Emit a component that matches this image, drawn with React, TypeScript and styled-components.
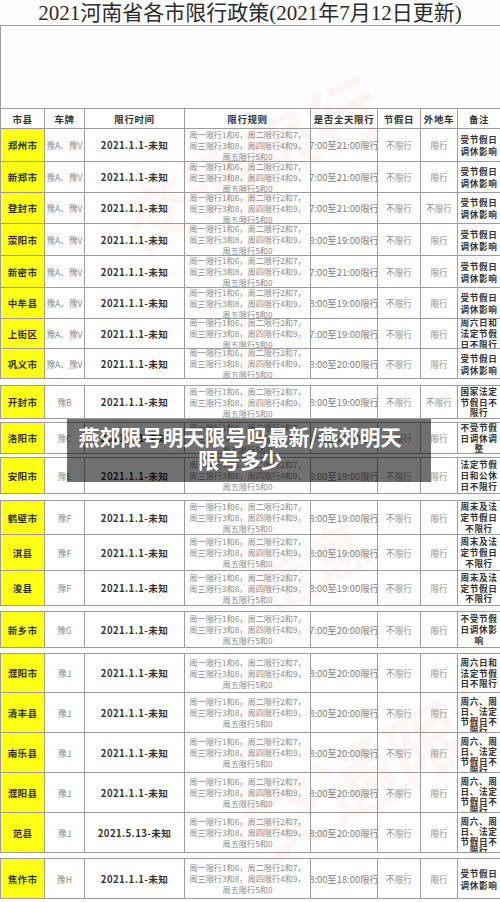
import React from 'react';
import styled, { createGlobalStyle } from 'styled-components';

const Global = createGlobalStyle`
  html, body { margin: 0; padding: 0; background: #fdfdfd; }
  body {
    width: 500px;
    height: 902px;
    overflow: hidden;
    font-family: "Noto Sans CJK SC", "Noto Sans", sans-serif;
  }
`;

const LINE = '#9c9c9c';
const COLS = '44px 40px 100px 126px 67px 43px 37px 42px';

const Page = styled.div`
  position: relative;
  width: 500px;
  height: 902px;
  overflow: hidden;
  background: #fdfdfd;
`;

const Title = styled.h1`
  margin: 0;
  height: 26px;
  box-sizing: border-box;
  border-bottom: 1px solid ${LINE};
  text-align: center;
  font-family: "Liberation Serif", "Noto Sans CJK SC", serif;
  font-weight: normal;
  font-size: 21px;
  line-height: 26px;
  color: #2b2b2b;
  white-space: nowrap;
`;

const Blank = styled.div`
  height: 82px;
  border-left: 1px solid ${LINE};
`;

const Group = styled.div<{ $gap: number }>`
  margin-top: ${(p) => p.$gap}px;
  border-top: 1px solid ${LINE};
  border-left: 1px solid ${LINE};
`;

const Row = styled.div<{ $h: number }>`
  display: grid;
  grid-template-columns: ${COLS};
  height: ${(p) => p.$h}px;
  box-sizing: border-box;
  border-bottom: 1px solid ${LINE};
`;

const Cell = styled.div`
  display: flex;
  align-items: center;
  justify-content: center;
  overflow: hidden;
  box-sizing: border-box;
  border-right: 1px solid ${LINE};
  white-space: nowrap;
  text-align: center;
  &:last-child { border-right: none; }
`;

const HeadCell = styled(Cell)`
  font-size: 9.5px;
  font-weight: 700;
  letter-spacing: 0.6px;
  color: #333;
  background: #fff;
`;

const NameCell = styled(Cell)`
  background: #ffff14;
  font-size: 9.5px;
  font-weight: 700;
  letter-spacing: 0.3px;
  color: #2e2e2e;
`;

const GreyCell = styled(Cell)`
  font-size: 8.6px;
  color: #8c8c8c;
  background: #fff;
`;

const PeriodCell = styled(Cell)`
  font-size: 9.6px;
  font-weight: 700;
  letter-spacing: 0.4px;
  color: #333;
  background: #fff;
`;

const HoursCell = styled(Cell)`
  font-size: 9.4px;
  color: #7c7c7c;
  background: #fff;
`;

const RuleCell = styled(Cell)`
  flex-direction: column;
  font-size: 8.2px;
  line-height: 11px;
  color: #8a8a8a;
  background: #fff;
`;

const NoteCell = styled(Cell)<{ $lh: number; $shift: number }>`
  flex-direction: column;
  font-size: 8.6px;
  font-weight: 700;
  letter-spacing: 0.6px;
  line-height: ${(p) => p.$lh}px;
  padding-top: ${(p) => p.$shift}px;
  color: #333;
  background: #fff;
`;

const Line = styled.span`
  display: block;
`;

const Overlay = styled.div`
  position: absolute;
  left: 67px;
  top: 419px;
  width: 364px;
  height: 63px;
  box-sizing: border-box;
  padding: 6px 26px 0 8px;
  background: rgba(0, 0, 0, 0.56);
  color: #fff;
  font-family: "Noto Sans CJK SC", sans-serif;
  font-weight: 700;
  font-size: 21px;
  line-height: 23px;
  text-align: center;
`;

const Watermark = styled.div<{ $x: number; $y: number; $r: number; $s: number }>`
  position: absolute;
  left: ${(p) => p.$x}px;
  top: ${(p) => p.$y}px;
  transform: rotate(${(p) => p.$r}deg);
  font-family: "Noto Sans CJK SC", sans-serif;
  font-weight: 700;
  font-size: ${(p) => p.$s}px;
  color: rgba(225, 90, 60, 0.055);
  white-space: nowrap;
  pointer-events: none;
`;

type Rec = {
  city: string;
  plate: string;
  period?: string;
  hours: string;
  holiday: string;
  outside: string;
  note: string[];
  h: number;
};

type G = { gap: number; rows: Rec[] };

const A = '豫A、豫V';
const N1 = ['受节假日', '调休影响'];
const N_WEEKEND = ['周末及法', '定节假日', '不限行'];
const N_SAT = ['周六、周', '日、法定', '节假日不', '限行'];

const groups: G[] = [
  {
    gap: 0,
    rows: [
      { city: '郑州市', plate: A, hours: '7:00至21:00限行', holiday: '不限行', outside: '限行', note: N1, h: 33 },
      { city: '新郑市', plate: A, hours: '7:00至21:00限行', holiday: '不限行', outside: '限行', note: N1, h: 31 },
      { city: '登封市', plate: A, hours: '7:00至21:00限行', holiday: '不限行', outside: '不限行', note: N1, h: 31 },
      { city: '荥阳市', plate: A, hours: '8:00至19:00限行', holiday: '不限行', outside: '限行', note: N1, h: 32 },
      { city: '新密市', plate: A, hours: '7:00至21:00限行', holiday: '不限行', outside: '限行', note: N1, h: 32 },
      { city: '中牟县', plate: A, hours: '8:00至19:00限行', holiday: '不限行', outside: '限行', note: N1, h: 31 },
      { city: '上街区', plate: A, hours: '7:00至19:00限行', holiday: '不限行', outside: '限行', note: ['周六日和', '法定节假', '日不限行'], h: 30 },
      { city: '巩义市', plate: A, hours: '8:00至20:00限行', holiday: '不限行', outside: '限行', note: N1, h: 30 },
    ],
  },
  {
    gap: 6,
    rows: [
      { city: '开封市', plate: '豫B', hours: '8:00至19:00限行', holiday: '不限行', outside: '不限行', note: ['国家法定', '节假日不', '限行'], h: 33 },
    ],
  },
  {
    gap: 3,
    rows: [
      { city: '洛阳市', plate: '豫C', hours: '7:00至21:00限行', holiday: '不限行', outside: '限行', note: ['不受节假', '日调休调', '整'], h: 31 },
    ],
  },
  {
    gap: 3,
    rows: [
      { city: '安阳市', plate: '豫E', hours: '8:00至19:00限行', holiday: '不限行', outside: '限行', note: ['法定节假', '日和公休', '日不限行'], h: 36 },
    ],
  },
  {
    gap: 6,
    rows: [
      { city: '鹤壁市', plate: '豫F', hours: '8:00至19:00限行', holiday: '不限行', outside: '限行', note: N_WEEKEND, h: 34 },
      { city: '淇县', plate: '豫F', hours: '8:00至19:00限行', holiday: '不限行', outside: '限行', note: N_WEEKEND, h: 36 },
      { city: '浚县', plate: '豫F', hours: '8:00至19:00限行', holiday: '不限行', outside: '限行', note: N_WEEKEND, h: 35 },
    ],
  },
  {
    gap: 5,
    rows: [
      { city: '新乡市', plate: '豫G', hours: '7:00至20:00限行', holiday: '不限行', outside: '限行', note: ['不受节假', '日调休影', '响'], h: 36 },
    ],
  },
  {
    gap: 5,
    rows: [
      { city: '濮阳市', plate: '豫J', hours: '8:00至20:00限行', holiday: '不限行', outside: '限行', note: ['周六日和', '法定节假', '日不限行'], h: 39 },
      { city: '清丰县', plate: '豫J', hours: '8:00至20:00限行', holiday: '不限行', outside: '限行', note: N_SAT, h: 40 },
      { city: '南乐县', plate: '豫J', hours: '8:00至20:00限行', holiday: '不限行', outside: '限行', note: N_SAT, h: 40 },
      { city: '濮阳县', plate: '豫J', hours: '8:00至20:00限行', holiday: '不限行', outside: '限行', note: N_SAT, h: 40 },
      { city: '范县', plate: '豫J', period: '2021.5.13-未知', hours: '8:00至20:00限行', holiday: '不限行', outside: '限行', note: N_SAT, h: 40 },
    ],
  },
  {
    gap: 5,
    rows: [
      { city: '焦作市', plate: '豫H', hours: '8:00至18:00限行', holiday: '不限行', outside: '限行', note: N1, h: 40 },
    ],
  },
];

const HEAD = ['市县', '车牌', '限行时间', '限行规则', '是否全天限行', '节假日', '外地车', '备注'];
const RULE = ['周一限行1和6，周二限行2和7，', '周三限行3和8，周四限行4和9，', '周五限行5和0'];

function DataRow({ r }: { r: Rec }) {
  const lines = r.note.length;
  const lh = lines === 2 ? 12 : lines === 4 ? 9.7 : 10.8;
  const shift = lines === 4 ? 8 : 0;
  return (
    <Row $h={r.h}>
      <NameCell>{r.city}</NameCell>
      <GreyCell>{r.plate}</GreyCell>
      <PeriodCell>{r.period ?? '2021.1.1-未知'}</PeriodCell>
      <RuleCell>
        {RULE.map((t) => (
          <Line key={t}>{t}</Line>
        ))}
      </RuleCell>
      <HoursCell>{r.hours}</HoursCell>
      <GreyCell>{r.holiday}</GreyCell>
      <GreyCell>{r.outside}</GreyCell>
      <NoteCell $lh={lh} $shift={shift}>
        {r.note.map((t, i) => (
          <Line key={i}>{t}</Line>
        ))}
      </NoteCell>
    </Row>
  );
}

export default function App() {
  return (
    <Page>
      <Global />
      <Title>2021河南省各市限行政策(2021年7月12日更新)</Title>
      <Blank />
      {groups.map((g, gi) => (
        <Group key={gi} $gap={g.gap}>
          {gi === 0 && (
            <Row $h={20}>
              {HEAD.map((h) => (
                <HeadCell key={h}>{h}</HeadCell>
              ))}
            </Row>
          )}
          {g.rows.map((r) => (
            <DataRow key={r.city} r={r} />
          ))}
        </Group>
      ))}
      <Watermark $x={110} $y={110} $r={-28} $s={70}>交通限行</Watermark>
      <Watermark $x={250} $y={520} $r={-28} $s={60}>信息</Watermark>
      <Watermark $x={230} $y={700} $r={-28} $s={80}>交通限行</Watermark>
      <Overlay>燕郊限号明天限号吗最新/燕郊明天限号多少</Overlay>
    </Page>
  );
}
